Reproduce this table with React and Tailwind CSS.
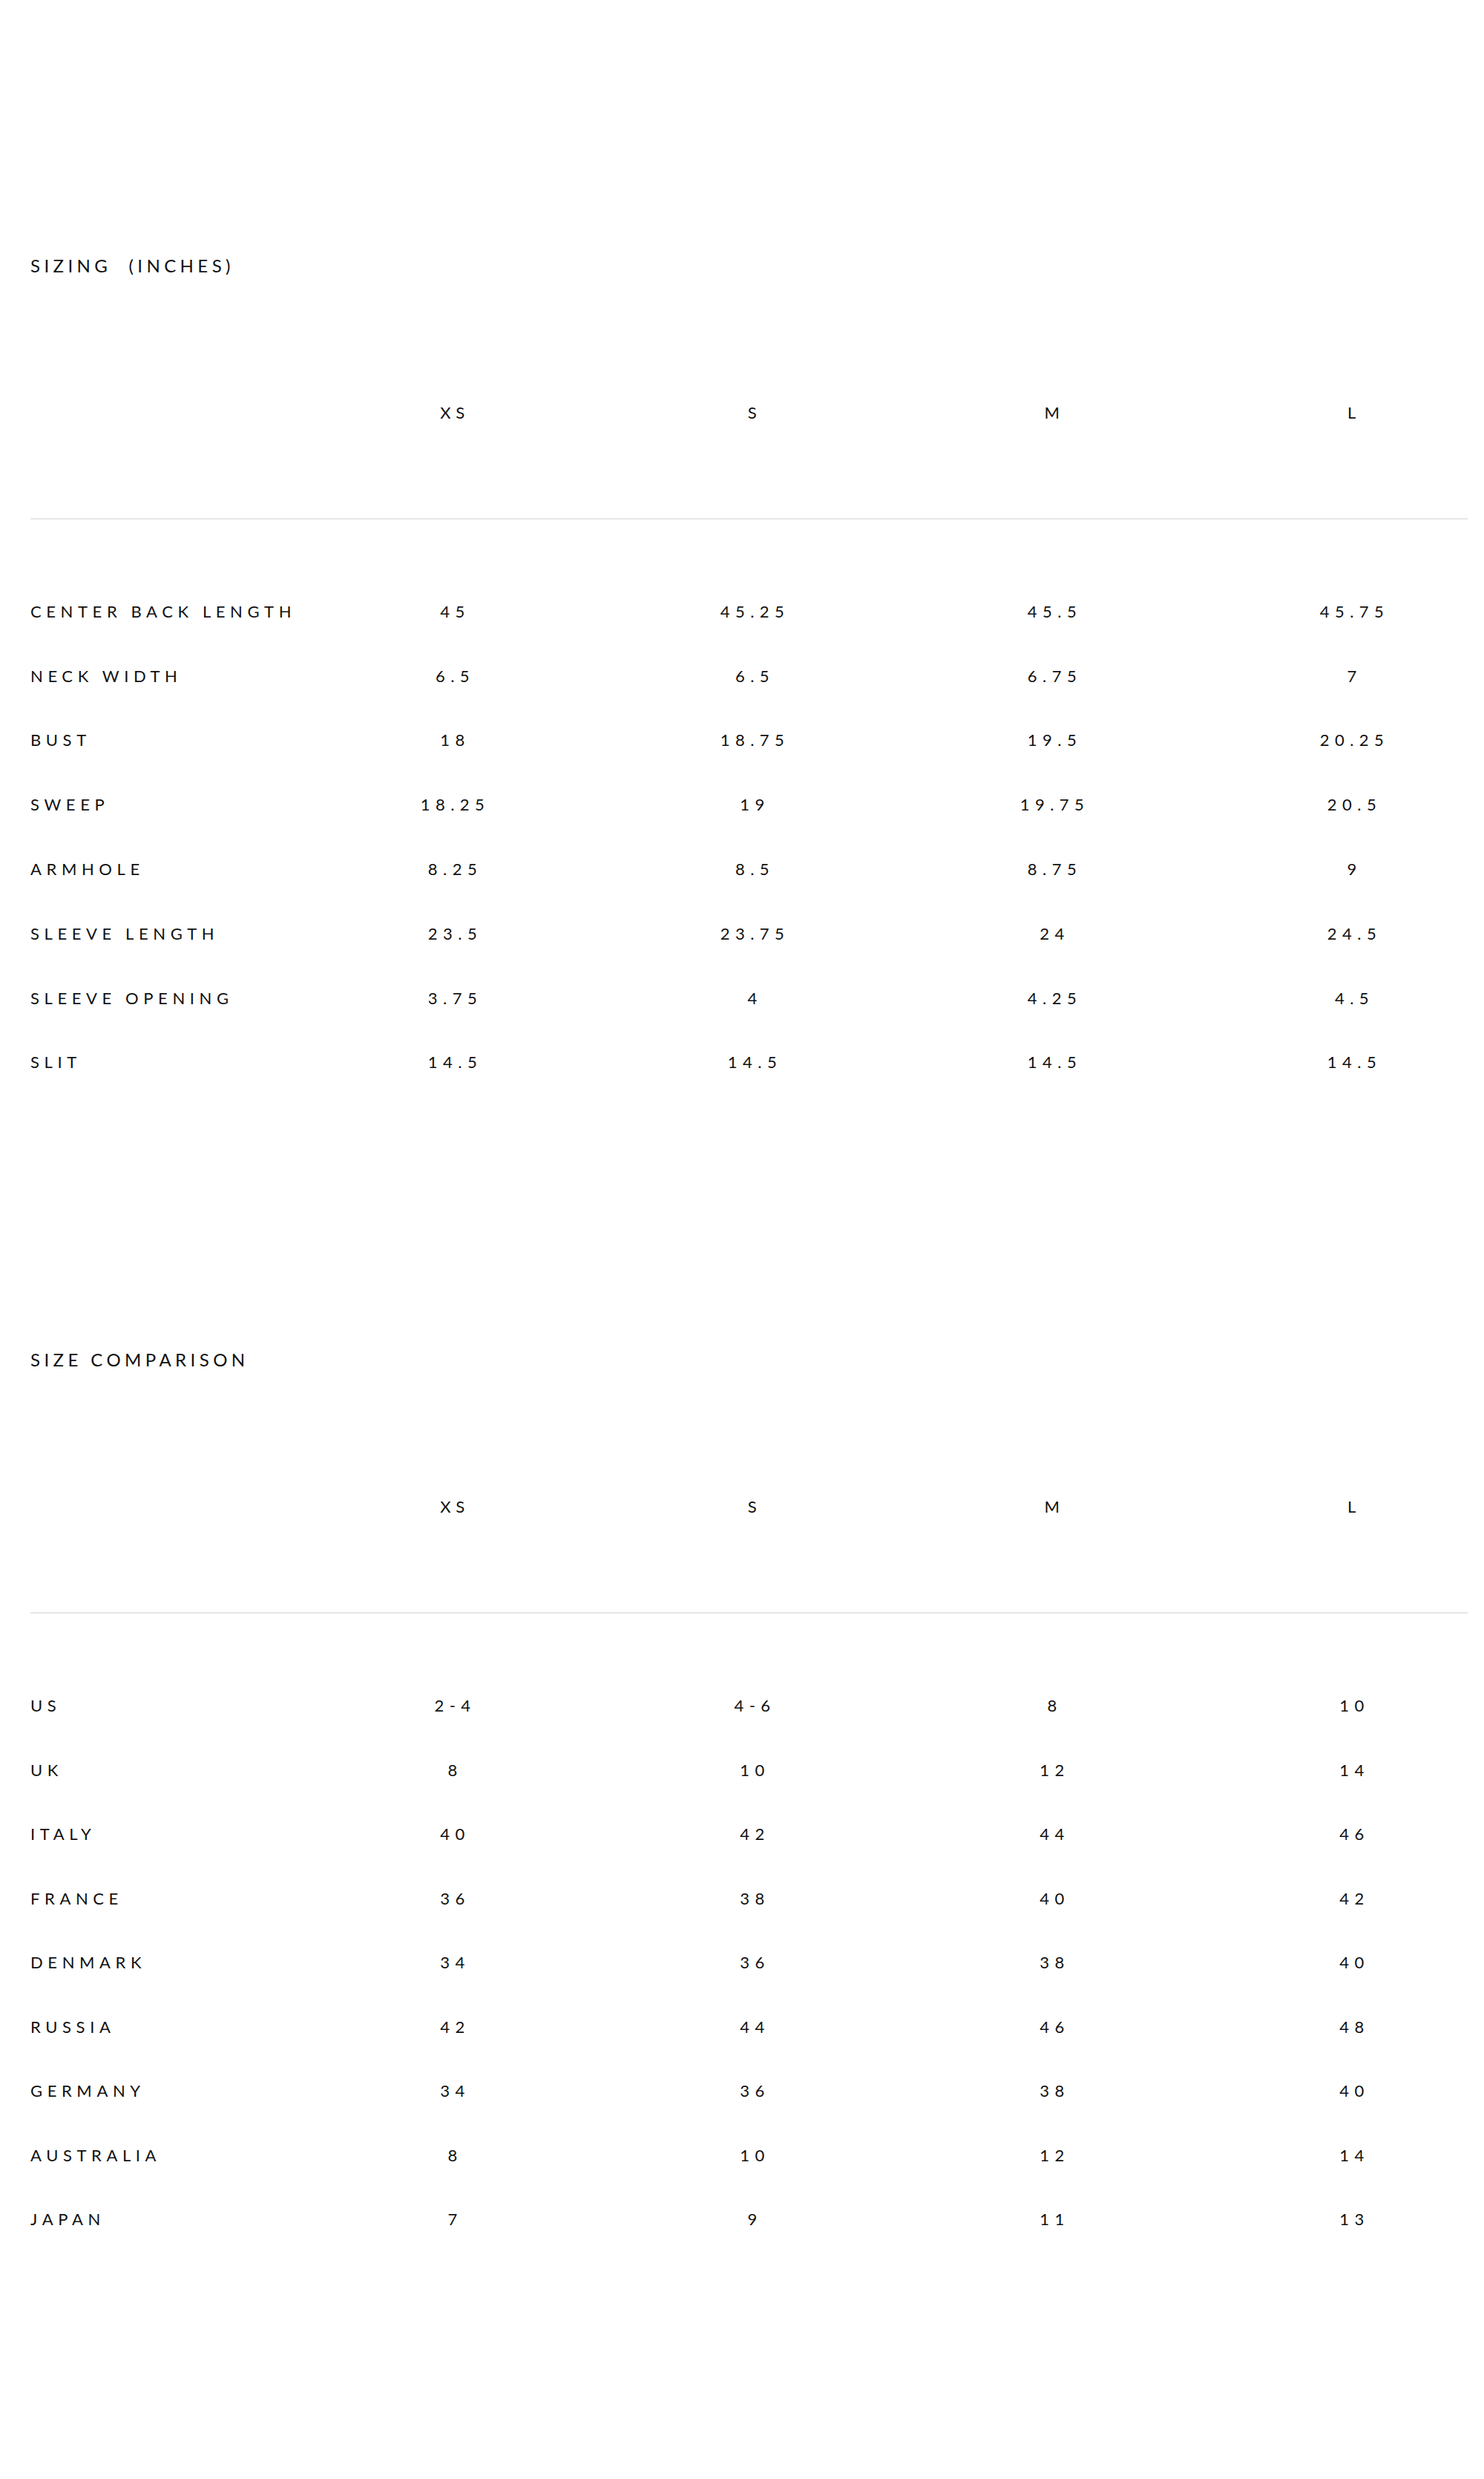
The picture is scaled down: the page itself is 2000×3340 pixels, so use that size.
const sizes = ['XS', 'S', 'M', 'L']

const sizing = [
  ['CENTER BACK LENGTH', '45', '45.25', '45.5', '45.75'],
  ['NECK WIDTH', '6.5', '6.5', '6.75', '7'],
  ['BUST', '18', '18.75', '19.5', '20.25'],
  ['SWEEP', '18.25', '19', '19.75', '20.5'],
  ['ARMHOLE', '8.25', '8.5', '8.75', '9'],
  ['SLEEVE LENGTH', '23.5', '23.75', '24', '24.5'],
  ['SLEEVE OPENING', '3.75', '4', '4.25', '4.5'],
  ['SLIT', '14.5', '14.5', '14.5', '14.5']
]

const comparison = [
  ['US', '2-4', '4-6', '8', '10'],
  ['UK', '8', '10', '12', '14'],
  ['ITALY', '40', '42', '44', '46'],
  ['FRANCE', '36', '38', '40', '42'],
  ['DENMARK', '34', '36', '38', '40'],
  ['RUSSIA', '42', '44', '46', '48'],
  ['GERMANY', '34', '36', '38', '40'],
  ['AUSTRALIA', '8', '10', '12', '14'],
  ['JAPAN', '7', '9', '11', '13']
]

const gridCols = 'grid grid-cols-[335px_repeat(4,340px)] gap-x-[64px] pl-[41px]'

const SizeTable = ({ title, rows, rowClass, className }) => (
  <section className={className}>
    <h2 className="pl-[41px] text-[24px] leading-[32px] tracking-[0.226em] font-normal whitespace-pre">
      {title}
    </h2>

    <div className={`${gridCols} mt-[165px] h-[30px] items-center text-[22px] tracking-[0.3em]`}>
      <div />
      {sizes.map(s => (
        <div key={s} className="text-center pl-[6px]">{s}</div>
      ))}
    </div>

    <div className="mt-[129px] ml-[41px] w-[1937px] h-[2px] bg-[#e6e6e6]" />

    <div className="pt-[80px]">
      {rows.map(([label, ...values]) => (
        <div key={label} className={`${gridCols} ${rowClass} items-center`}>
          <div className="text-[22px] tracking-[0.3em] whitespace-nowrap">{label}</div>
          {values.map((v, i) => (
            <div key={i} className="text-center pl-[7px] text-[22px] tracking-[0.34em]">
              {v}
            </div>
          ))}
        </div>
      ))}
    </div>
  </section>
)

export default function App() {
  return (
    <div className="min-h-screen bg-white text-[#111111] font-['Lato','Noto_Sans',sans-serif] pt-[342px] pb-[300px]">
      <SizeTable title={'SIZING\u00a0 (INCHES)'} rows={sizing} rowClass="h-[86.8px]" />
      <SizeTable title="SIZE COMPARISON" rows={comparison} rowClass="h-[86.5px]" className="mt-[342px]" />
    </div>
  )
}
